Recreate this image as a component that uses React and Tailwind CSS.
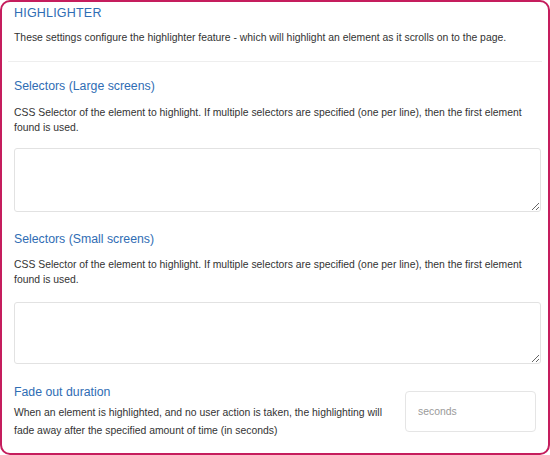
export default function App() {
  return (
    <div className="w-[550px] h-[455px] bg-white" style={{ fontFamily: '"Liberation Sans", Arial, sans-serif' }}>
      <div className="h-[455px] border-2 border-[#c51d5d] rounded-[10px] pt-[1px] text-[#333]">
        <div className="px-[12px]">
          <h1 className="text-[12.5px] leading-[20px] text-[#2f6db4] tracking-[0.2px]">HIGHLIGHTER</h1>
          <p className="text-[10.4px] leading-[16px] mt-[7px]">
            These settings configure the highlighter feature - which will highlight an element as it scrolls on to the page.
          </p>
        </div>
        <hr className="mx-[6px] mt-[15px] border-t border-[#eeeeee]" />

        <div className="px-[12px]">
          <h2 className="text-[12.3px] leading-[20px] mt-[14px] text-[#2f6db4]">Selectors (Large screens)</h2>
          <p className="text-[10.4px] leading-[15px] mt-[9px]">
            CSS Selector of the element to highlight. If multiple selectors are specified (one per line), then the first element found is used.
          </p>
          <textarea className="block w-[527px] h-[64px] mt-[13px] border border-[#e2e2e2] rounded-[3px] resize-y" />

          <h2 className="text-[12.3px] leading-[20px] mt-[17px] text-[#2f6db4]">Selectors (Small screens)</h2>
          <p className="text-[10.4px] leading-[15px] mt-[8px]">
            CSS Selector of the element to highlight. If multiple selectors are specified (one per line), then the first element found is used.
          </p>
          <textarea className="block w-[527px] h-[62px] mt-[15px] border border-[#e2e2e2] rounded-[3px] resize-y" />

          <div className="flex items-center gap-[20px] mt-[18px]">
            <div className="flex-1">
              <h2 className="text-[12.3px] leading-[20px] text-[#2f6db4]">Fade out duration</h2>
              <p className="text-[10.4px] leading-[18px] mt-[2px]">
                When an element is highlighted, and no user action is taken, the highlighting will fade away after the specified amount of time (in seconds)
              </p>
            </div>
            <input
              placeholder="seconds"
              className="shrink-0 w-[131px] h-[41px] border border-[#e5e5e5] rounded-[4px] px-[12px] text-[10.4px] placeholder:text-[#9a9a9a] outline-none"
            />
          </div>
        </div>
      </div>
    </div>
  )
}
